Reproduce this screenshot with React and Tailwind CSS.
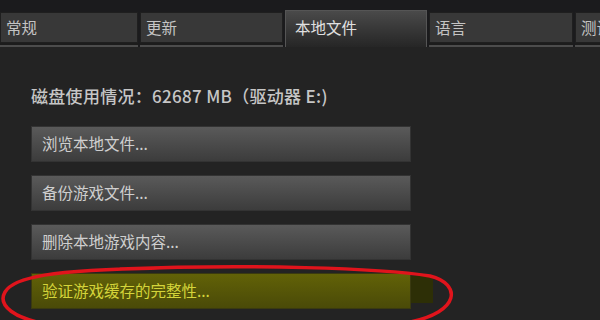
import React from 'react';

const tabs = [
  { label: '常规', w: 'w-[138px]' },
  { label: '更新', w: 'w-[143px]' },
  { label: '本地文件', w: 'w-[142px]', active: true },
  { label: '语言', w: 'w-[144px]' },
  { label: '测试', w: 'w-[60px]' },
];

const buttons = ['浏览本地文件...', '备份游戏文件...', '删除本地游戏内容...'];

const App = () => {
  return (
    <div
      className="relative w-[600px] h-[320px] overflow-hidden bg-[#232323]"
      style={{ fontFamily: '"Noto Sans CJK SC", "Liberation Sans", sans-serif' }}
    >
      {/* top strip */}
      <div className="h-[10px] bg-[#1b1b1d]" />

      {/* tabs */}
      <div className="flex items-end gap-[2px] h-[37px] bg-[#1b1b1d]">
        {tabs.map((t) =>
          t.active ? (
            <div
              key={t.label}
              className={`${t.w} shrink-0 h-[37px] flex items-center pl-[9px] pb-[3px] text-[15.5px] text-[#e0e0e0] bg-gradient-to-b from-[#4a4a4a] to-[#262626] border-t border-x border-[#555]`}
            >
              {t.label}
            </div>
          ) : (
            <div key={t.label} className={`${t.w} shrink-0 h-[35px] flex flex-col`}>
              <div className="h-[31px] flex items-center pl-[9px] first:pl-[5px] text-[15.5px] text-[#c4c4c4] bg-[#383838] border border-[#1f1f1f] overflow-hidden whitespace-nowrap">
                {t.label}
              </div>
              <div className="h-[2px] bg-[#1c1c1c]" />
              <div className="h-[2px] bg-[#4c4c4c]" />
            </div>
          )
        )}
      </div>

      {/* content */}
      <div className="px-[31px] pt-[37px]">
        <div className="text-[17px] leading-[23px] font-medium text-[#c6c6c6] tracking-[0.3px]">
          磁盘使用情况：62687 MB（驱动器 E:)
        </div>

        <div className="mt-[19px] flex flex-col gap-[13px] w-[380px]">
          {buttons.map((b) => (
            <div
              key={b}
              className="h-[36px] flex items-center pl-[10px] text-[15.5px] text-[#cfcfcf] bg-gradient-to-b from-[#5a5a5a] to-[#3c3c3c] border border-[#333]"
            >
              {b}
            </div>
          ))}
          <div className="relative h-[36px]">
            <div className="absolute left-[380px] top-[3px] w-[22px] h-[27px] bg-[#2d2f06]" />
            <div className="h-[36px] flex items-center pl-[10px] text-[15.5px] text-[#d4d43a] bg-gradient-to-b from-[#626207] to-[#4a4a08] border border-[#3a3a10]">
              验证游戏缓存的完整性...
            </div>
          </div>
        </div>
      </div>

      {/* red hand-drawn circle */}
      <svg className="absolute left-0 top-[262px]" width="470" height="80" viewBox="0 0 470 80">
        <path
          d="M120 7 C 250 2, 380 6, 430 14 C 462 22, 460 50, 410 60 C 330 72, 150 70, 60 64 C 10 58, -2 42, 5 30 C 14 15, 50 8, 160 6"
          fill="none"
          stroke="#e0141c"
          strokeWidth="3.5"
          strokeLinecap="round"
        />
      </svg>
    </div>
  );
};

export default App;
